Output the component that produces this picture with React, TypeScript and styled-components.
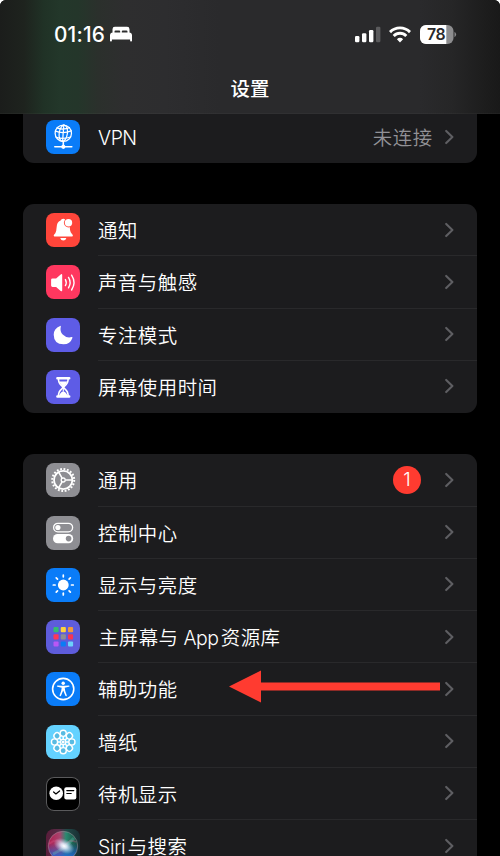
import React from "react";
import styled, { createGlobalStyle } from "styled-components";

const GlobalStyle = createGlobalStyle`
  * { box-sizing: border-box; }
  html, body { margin: 0; padding: 0; background: #fff; }
  body { overflow: hidden; font-family: Inter, "Noto Sans CJK SC", sans-serif; }
  svg { display: block; flex: none; }
`;

const Screen = styled.main`
  width: 500px;
  height: 856px;
  overflow: hidden;
  display: flex;
  flex-direction: column;
  background: #000;
  border-radius: 6px 6px 0 0;
  color: #fff;
`;

const Header = styled.header`
  height: 114px;
  flex: none;
  display: flex;
  flex-direction: column;
  border-bottom: 1px solid rgba(255, 255, 255, 0.03);
  background: linear-gradient(
    90deg,
    #1b1d1b 0,
    #1e231e 24px,
    #203226 44px,
    #23372a 60px,
    #24362a 78px,
    #2b302c 98px,
    #2e2e2f 125px,
    #2d2d2f 165px,
    #2a2a2c 220px,
    #2a2a2c 420px,
    #262627 452px,
    #1d1d1d 484px,
    #191919 500px
  );
`;

const StatusBar = styled.div`
  height: 68px;
  display: flex;
  align-items: center;
  justify-content: space-between;
  padding: 0 43px 0 54px;
`;

const StatusGroup = styled.div<{ $gap: number }>`
  display: flex;
  align-items: center;
  gap: ${(p) => p.$gap}px;
`;

const Clock = styled.span`
  padding-top: 1px;
  font-size: 20.8px;
  font-weight: 550;
  line-height: 24px;
  letter-spacing: 0.2px;
`;

const Title = styled.h1`
  margin: 0;
  height: 40px;
  line-height: 42px;
  text-align: center;
  font-size: 19.4px;
  font-weight: 500;
`;

const List = styled.div`
  flex: 1;
  min-height: 0;
  display: flex;
  flex-direction: column;
  gap: 41.2px;
  padding: 0 23.4px;
`;

const Card = styled.section<{ $attached?: boolean }>`
  flex: none;
  background: #1c1c1e;
  border-radius: ${(p) => (p.$attached ? "0 0 11px 11px" : "11px")};
`;

const RowBox = styled.div<{ $height: number; $iconShift: number }>`
  position: relative;
  height: ${(p) => p.$height}px;
  display: flex;
  align-items: center;
  padding-left: 22.8px;
  padding-bottom: ${(p) => p.$iconShift}px;
`;

const Content = styled.div<{ $last: boolean; $height: number; $shift: number }>`
  flex: 1;
  height: ${(p) => p.$height}px;
  margin-bottom: -${(p) => p.$shift}px;
  margin-left: 17.5px;
  padding-right: 23px;
  padding-bottom: ${(p) => p.$shift}px;
  display: flex;
  align-items: center;
  border-bottom: 1px solid ${(p) => (p.$last ? "transparent" : "#29292b")};
`;

const Label = styled.span<{ $indent: number }>`
  flex: 1;
  margin-left: ${(p) => p.$indent}px;
  padding-top: 3px;
  white-space: nowrap;
  font-size: 19.4px;
  font-weight: 350;
  line-height: 28px;
  letter-spacing: 0.5px;
`;

const Latin = styled.span<{ $spacing: number; $after?: number }>`
  letter-spacing: ${(p) => p.$spacing}px;
  margin-right: ${(p) => p.$after ?? 0}px;
`;

const Detail = styled.span`
  padding-top: 3px;
  margin-right: 11.8px;
  font-size: 19.4px;
  font-weight: 350;
  line-height: 28px;
  letter-spacing: 0.6px;
  color: #929297;
`;

const Badge = styled.span`
  width: 28px;
  height: 28px;
  margin-right: 23.5px;
  border-radius: 50%;
  background: #ff3b30;
  font-size: 19px;
  font-weight: 350;
  line-height: 28px;
  text-align: center;
`;

const IconTile = styled.div<{ $bg: string; $outlined?: boolean }>`
  width: 34px;
  height: 34px;
  flex: none;
  border-radius: 8px;
  overflow: hidden;
  background: ${(p) => p.$bg};
  box-shadow: ${(p) => (p.$outlined ? "inset 0 0 0 1px #5a5a5c" : "none")};
`;

const ArrowOverlay = styled.div`
  position: absolute;
  left: 205.6px;
  top: 7px;
`;

const Glyph = ({ children }: { children: React.ReactNode }) => (
  <svg width="34" height="34" viewBox="0 0 34 34" fill="none">
    {children}
  </svg>
);

const Chevron = () => (
  <svg width="9" height="16" viewBox="0 0 9 16" fill="none">
    <path d="M1.2 1.9 7.4 8l-6.2 6.1" stroke="#5e5e62" strokeWidth="2.1" strokeLinecap="round" strokeLinejoin="round" />
  </svg>
);

const BedIcon = () => (
  <svg width="22" height="16" viewBox="0 0 22 16" fill="#fff">
    <path d="M2.5 7V3.2Q2.5.8 4.9.8h12.2q2.4 0 2.4 2.4V7h-2V5.6q0-1-1-1h-3.7q-1 0-1 1V7h-1.6V5.6q0-1-1-1H5.5q-1 0-1 1V7Z" />
    <path d="M0 14.7V9.5Q0 6.4 3 6.4h16q3 0 3 3.1v5.2q0 .8-.8.8h-.3q-.8 0-.8-.8v-1.2H1.9v1.2q0 .8-.8.8H.8q-.8 0-.8-.8Z" />
  </svg>
);

const SignalIcon = () => (
  <svg width="26" height="17" viewBox="0 0 26 17" fill="#fff">
    <rect x="0" y="10" width="4.4" height="6.3" rx="1.2" />
    <rect x="7" y="7.2" width="4.4" height="9.1" rx="1.2" />
    <rect x="14" y="4" width="4.4" height="12.3" rx="1.2" />
    <rect x="21" y=".8" width="4.4" height="15.5" rx="1.2" fill="#5b5b5d" />
  </svg>
);

const WifiIcon = () => (
  <svg width="22" height="17" viewBox="0 0 22 17" fill="none" stroke="#fff" strokeWidth="2.9">
    <path d="M1 6.1Q5.2 1.9 11 1.9t10 4.2" />
    <path d="M4.7 10Q7.3 7.3 11 7.3t6.3 2.7" />
    <path d="M11 16.4 7.9 13.2Q9.2 11.8 11 11.8t3.1 1.4Z" fill="#fff" stroke="none" />
  </svg>
);

const BatteryIcon = () => (
  <svg width="37" height="19" viewBox="0 0 37 19">
    <defs>
      <clipPath id="battery-level">
        <rect width="26.3" height="19" />
      </clipPath>
    </defs>
    <rect width="33.5" height="19" rx="6" fill="#8d8d8f" />
    <rect width="33.5" height="19" rx="6" fill="#fff" clipPath="url(#battery-level)" />
    <path d="M34.5 6.8q1.6 1 1.6 2.7t-1.6 2.7Z" fill="#8d8d8f" />
    <text x="16" y="15.2" textAnchor="middle" fontFamily="Inter, sans-serif" fontSize="15.8" fontWeight="600" letterSpacing="-.5" fill="#29292b">78</text>
  </svg>
);

const VpnGlyph = () => (
  <Glyph>
    <g stroke="#fff" strokeWidth="1.25" strokeLinecap="round">
      <circle cx="17.3" cy="13.2" r="8.2" />
      <ellipse cx="17.3" cy="13.2" rx="4.1" ry="8.2" transform="rotate(8 17.3 13.2)" />
      <path d="M17.8 5 16.6 21.3M9.3 11.2q8 2.8 16-.4M10.2 17.3q7 2.2 14.3-.3M11 7.8q6 2.5 12.5-.2" />
      <path d="M17.3 21.5V26M8.8 26.8h17" strokeWidth="1.6" />
    </g>
    <circle cx="17.3" cy="26.8" r="2.1" fill="#fff" />
  </Glyph>
);

const BellGlyph = () => (
  <Glyph>
    <path d="M7.7 22.6Q7.9 21.5 9.3 20.2 10.4 18.8 10.5 15.3 10.7 8.6 14.6 7.4 15.3 5.8 17.2 5.8q1.6 0 2.3 1.3l4.3 6.6q.1 4.9 1.6 6.5 1.3 1.3 1.5 2.4 0 .9-.9.9H8.6q-.9 0-.9-.9Z" fill="#fff" />
    <path d="M14.2 24.9h6.2q-.8 2.5-3.1 2.5t-3.1-2.5Z" fill="#fff" />
    <circle cx="22.5" cy="9.8" r="4.6" fill="#ff453a" />
    <circle cx="22.5" cy="9.8" r="3.7" fill="#fff" />
  </Glyph>
);

const SpeakerGlyph = () => (
  <Glyph>
    <path d="M6.5 13.4h3.6l4.6-4q1.5-1 1.5.6v15.3q0 1.6-1.5.6l-4.6-4H6.5q-1.4 0-1.4-1.4v-5.7q0-1.4 1.4-1.4Z" fill="#fff" />
    <g stroke="#fff" strokeWidth="1.4" strokeLinecap="round">
      <path d="M19.4 14.6q1.7 3 0 6" />
      <path d="M22.5 12.4q3.2 5.2 0 10.4" />
      <path d="M25.6 10.2q4.8 7.4 0 14.8" />
    </g>
  </Glyph>
);

const MoonGlyph = () => (
  <Glyph>
    <path d="M14.1 7.9q.9-.4.7.5-1.1 5 1.9 8.2 3.5 3.7 9 2.5 1-.2.7.8-2.2 6.4-8.9 6.4-9.7-.2-9.8-9.6 0-6.4 6.4-8.8Z" fill="#fff" />
  </Glyph>
);

const HourglassGlyph = () => (
  <Glyph>
    <path d="M11.4 8.2h11.8M11.4 26.5h11.8" stroke="#fff" strokeWidth="2.5" strokeLinecap="round" />
    <path d="M12.5 8.7q-.2 4.5 3.5 7.3.9.7.9 1.3t-.9 1.3q-3.7 2.8-3.5 7.6M22.1 8.7q.2 4.5-3.5 7.3-.9.7-.9 1.3t.9 1.3q3.7 2.8 3.5 7.6" stroke="#fff" strokeWidth="1.6" />
    <path d="M13.3 11.6h8q-.8 2.2-3.1 4.2l-.9 1.2-.9-1.2q-2.3-2-3.1-4.2Z" fill="#fff" />
    <path d="M17.3 16v5.5" stroke="#fff" strokeWidth="1.1" />
    <path d="M13.2 26q.5-3.2 4.1-4.7 3.6 1.5 4.1 4.7Z" fill="#fff" />
  </Glyph>
);

const GearGlyph = () => (
  <Glyph>
    <g stroke="#fff">
      <circle cx="17.2" cy="17" r="9.2" strokeWidth="1.8" />
      <circle cx="17.2" cy="17" r="11" strokeWidth="2" strokeDasharray="1.84 1.616" />
      <circle cx="17.2" cy="17" r="2" strokeWidth="1.3" />
      <path d="M19.4 17h7M16.1 15.1l-3.6-6.2M16.1 18.9l-3.6 6.2" strokeWidth="1.6" />
    </g>
  </Glyph>
);

const TogglesGlyph = () => (
  <Glyph>
    <rect x="7.6" y="7.3" width="19" height="8.5" rx="4.25" stroke="#fff" strokeWidth="1.3" />
    <circle cx="11.9" cy="11.5" r="2.6" fill="#fff" />
    <rect x="7" y="18" width="20.2" height="9.3" rx="4.65" fill="#fff" />
    <circle cx="22.6" cy="22.6" r="2.8" fill="#8e8e93" />
  </Glyph>
);

const SunGlyph = () => (
  <Glyph>
    <circle cx="17.3" cy="17" r="5.4" fill="#fff" />
    <g stroke="#fff" strokeWidth="1.7" strokeLinecap="round">
      {[0, 45, 90, 135, 180, 225, 270, 315].map((angle) => (
        <path key={angle} d="M17.3 8.8V7" transform={`rotate(${angle} 17.3 17)`} />
      ))}
    </g>
  </Glyph>
);

const APP_COLORS = ["#35bd72", "#ffd23c", "#f09a3c", "#ff3757", "#8e8e93", "#f83454", "#b857f5", "#0a7cf5", "#6cd1fb"];

const AppGridGlyph = () => (
  <Glyph>
    {APP_COLORS.map((color, i) => (
      <rect key={color} x={7.5 + (i % 3) * 7.25} y={7.1 + Math.floor(i / 3) * 7.2} width="5.1" height="5.1" rx="1" fill={color} />
    ))}
  </Glyph>
);

const AccessibilityGlyph = () => (
  <Glyph>
    <circle cx="17.2" cy="17" r="10.6" stroke="#fff" strokeWidth="1.6" />
    <circle cx="17.2" cy="11.2" r="1.7" fill="#fff" />
    <path d="M11.6 13.4q-.8 0-.8.6t.7.8l4.2 1q-.1 3.1-2 7.2-.4 1 .3 1.3.7.3 1.1-.7l2.1-5 2.1 5q.4 1 1.1.7.7-.3.3-1.3-1.9-4.1-2-7.2l4.2-1q.7-.2.7-.8t-.8-.6l-4 .4h-3.2Z" fill="#fff" />
  </Glyph>
);

const PETAL_ANGLES = [0, 45, 90, 135, 180, 225, 270, 315];

const FlowerGlyph = () => (
  <Glyph>
    <g stroke="#fff" strokeWidth="1.4" fill="#58bbe2">
      {PETAL_ANGLES.map((angle) => (
        <circle key={angle} cx="17.2" cy="8.3" r="3.1" transform={`rotate(${angle} 17.2 17)`} />
      ))}
    </g>
    <g stroke="#fff" strokeWidth="1.5">
      {PETAL_ANGLES.map((angle) => (
        <path key={angle} d="M17.2 11.4V16" transform={`rotate(${angle} 17.2 17)`} />
      ))}
    </g>
    <circle cx="17.2" cy="17" r="2.6" stroke="#fff" strokeWidth="1.2" fill="#58bbe2" />
    <circle cx="17.2" cy="17" r="1.5" fill="#fff" />
  </Glyph>
);

const StandbyGlyph = () => (
  <Glyph>
    <circle cx="10.2" cy="16.3" r="6.8" fill="#fff" />
    <path d="m7.6 15 2.3 2 3.7-3" stroke="#000" strokeWidth="1.2" strokeLinecap="round" strokeLinejoin="round" />
    <rect x="18.3" y="10.2" width="12" height="12.2" rx="2" fill="#fff" />
    <path d="M20.8 13.6h7M20.8 16.5h4.4" stroke="#000" strokeWidth="1.2" strokeLinecap="round" />
  </Glyph>
);

const SiriGlyph = () => (
  <Glyph>
    <defs>
      <linearGradient id="siri-side" x1="0" y1="0" x2="1" y2="0">
        <stop offset="0" stopColor="#b01e50" />
        <stop offset=".4" stopColor="#a8446e" />
        <stop offset=".6" stopColor="#2a8a70" />
        <stop offset="1" stopColor="#16493f" />
      </linearGradient>
      <linearGradient id="siri-depth" x1="0" y1="0" x2="0" y2="1">
        <stop offset=".4" stopColor="#195dc5" stopOpacity="0" />
        <stop offset=".85" stopColor="#2068d7" stopOpacity=".85" />
      </linearGradient>
      <radialGradient id="siri-glow">
        <stop offset="0" stopColor="#fff" />
        <stop offset=".3" stopColor="#e9efff" stopOpacity=".85" />
        <stop offset="1" stopColor="#bfd8ff" stopOpacity="0" />
      </radialGradient>
    </defs>
    <rect width="34" height="34" fill="url(#siri-side)" opacity=".42" />
    <circle cx="17" cy="17" r="14.7" fill="url(#siri-side)" />
    <circle cx="17" cy="17" r="14.7" fill="url(#siri-depth)" />
    <path d="M3 15Q12 7 18 17 24 9 30 13" stroke="#df588b" strokeWidth="2" opacity=".3" />
    <path d="M7 25Q18 20 28 9" stroke="#65d5bd" strokeWidth="3" opacity=".3" />
    <ellipse cx="18" cy="17" rx="11" ry="7" fill="url(#siri-glow)" transform="rotate(28 18 17)" />
    <circle cx="17" cy="17" r="14.7" stroke="#a5919f" strokeWidth=".8" opacity=".65" />
  </Glyph>
);

const RedArrow = () => (
  <svg width="212" height="33" viewBox="0 0 212 33">
    <path d="M0 16.5 32 .5v12h179v8H32v12Z" fill="#ff3b30" />
  </svg>
);

interface RowProps {
  icon: React.ReactNode;
  bg: string;
  label: React.ReactNode;
  indent?: number;
  outlined?: boolean;
  last?: boolean;
  height?: number;
  shift?: number;
  detail?: string;
  badge?: number;
  arrow?: boolean;
}

const Row = ({ icon, bg, label, indent = 0.4, outlined, last = false, height = 52.25, shift = 0.5, detail, badge, arrow }: RowProps) => (
  <RowBox $height={height} $iconShift={shift}>
    <IconTile $bg={bg} $outlined={outlined}>{icon}</IconTile>
    <Content $last={last} $height={height} $shift={shift}>
      <Label $indent={indent}>{label}</Label>
      {detail && <Detail>{detail}</Detail>}
      {badge !== undefined && <Badge>{badge}</Badge>}
      <Chevron />
    </Content>
    {arrow && (
      <ArrowOverlay>
        <RedArrow />
      </ArrowOverlay>
    )}
  </RowBox>
);

export default function App() {
  return (
    <>
      <GlobalStyle />
      <Screen>
        <Header>
          <StatusBar>
            <StatusGroup $gap={5}>
              <Clock>01:16</Clock>
              <BedIcon />
            </StatusGroup>
            <StatusGroup $gap={8.6}>
              <SignalIcon />
              <WifiIcon />
              <BatteryIcon />
            </StatusGroup>
          </StatusBar>
          <Title>设置</Title>
        </Header>
        <List>
          <Card $attached>
            <Row icon={<VpnGlyph />} bg="#0a7cf8" label={<Latin $spacing={-0.5}>VPN</Latin>} detail="未连接" height={49} shift={2.5} last />
          </Card>
          <Card>
            <Row icon={<BellGlyph />} bg="#ff453a" label="通知" />
            <Row icon={<SpeakerGlyph />} bg="#ff375f" label="声音与触感" />
            <Row icon={<MoonGlyph />} bg="#5e5ce6" label="专注模式" />
            <Row icon={<HourglassGlyph />} bg="#5e5ce6" label="屏幕使用时间" last />
          </Card>
          <Card>
            <Row icon={<GearGlyph />} bg="#8e8e93" label="通用" badge={1} />
            <Row icon={<TogglesGlyph />} bg="#8e8e93" label="控制中心" />
            <Row icon={<SunGlyph />} bg="#0a7cf8" label="显示与亮度" />
            <Row
              icon={<AppGridGlyph />}
              bg="#5e5cdb"
              indent={1.2}
              label={<>主屏幕与<Latin $spacing={-0.45} $after={2.3}> App</Latin>资源库</>}
            />
            <Row icon={<AccessibilityGlyph />} bg="#0a7cf8" label="辅助功能" arrow />
            <Row icon={<FlowerGlyph />} bg="#64d2ff" label="墙纸" />
            <Row icon={<StandbyGlyph />} bg="#000" outlined label="待机显示" />
            <Row icon={<SiriGlyph />} bg="#1b1b2a" label={<><Latin $spacing={-0.35} $after={2.5}>Siri</Latin>与搜索</>} />
          </Card>
        </List>
      </Screen>
    </>
  );
}
